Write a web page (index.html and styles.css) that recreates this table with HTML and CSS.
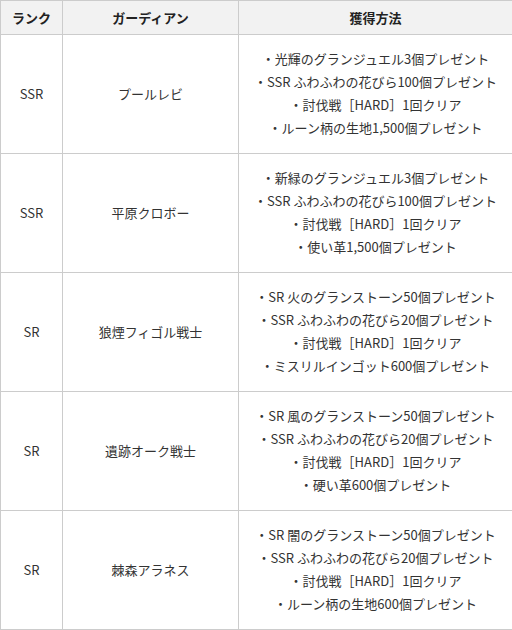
FILE: index.html
```html
<!DOCTYPE html>
<html lang="ja">
<head>
<meta charset="utf-8">
<link rel="stylesheet" href="styles.css">
</head>
<body>
<table class="guardians">
  <colgroup>
    <col class="c-rank">
    <col class="c-name">
    <col class="c-how">
  </colgroup>
  <thead>
    <tr><th>ランク</th><th>ガーディアン</th><th>獲得方法</th></tr>
  </thead>
  <tbody>
    <tr>
      <td>SSR</td><td>プールレビ</td>
      <td class="how">・光輝のグランジュエル3個プレゼント<br>・SSR ふわふわの花びら100個プレゼント<br>・討伐戦［HARD］1回クリア<br>・ルーン柄の生地1,500個プレゼント</td>
    </tr>
    <tr>
      <td>SSR</td><td>平原クロボー</td>
      <td class="how">・新緑のグランジュエル3個プレゼント<br>・SSR ふわふわの花びら100個プレゼント<br>・討伐戦［HARD］1回クリア<br>・使い革1,500個プレゼント</td>
    </tr>
    <tr>
      <td>SR</td><td>狼煙フィゴル戦士</td>
      <td class="how">・SR 火のグランストーン50個プレゼント<br>・SSR ふわふわの花びら20個プレゼント<br>・討伐戦［HARD］1回クリア<br>・ミスリルインゴット600個プレゼント</td>
    </tr>
    <tr>
      <td>SR</td><td>遺跡オーク戦士</td>
      <td class="how">・SR 風のグランストーン50個プレゼント<br>・SSR ふわふわの花びら20個プレゼント<br>・討伐戦［HARD］1回クリア<br>・硬い革600個プレゼント</td>
    </tr>
    <tr>
      <td>SR</td><td>棘森アラネス</td>
      <td class="how">・SR 闇のグランストーン50個プレゼント<br>・SSR ふわふわの花びら20個プレゼント<br>・討伐戦［HARD］1回クリア<br>・ルーン柄の生地600個プレゼント</td>
    </tr>
  </tbody>
</table>
</body>
</html>
```
FILE: styles.css
```css
html, body {
  margin: 0;
  padding: 0;
  background: #fff;
}
body {
  font-family: "Noto Sans CJK JP", "Noto Sans", sans-serif;
  font-size: 13px;
  color: #333;
}
.guardians {
  width: 512px;
  border-collapse: collapse;
  table-layout: fixed;
}
.c-rank { width: 62px; }
.c-name { width: 176px; }
.c-how { width: 274px; }
.guardians th,
.guardians td {
  border: 1px solid #ccc;
  text-align: center;
  vertical-align: middle;
  padding: 0;
}
.guardians th {
  background: #f2f2f2;
  font-weight: bold;
  height: 33px;
  color: #222;
}
.guardians td {
  height: 116px;
  padding-bottom: 2px;
}
.guardians td.how {
  line-height: 23px;
}
```
